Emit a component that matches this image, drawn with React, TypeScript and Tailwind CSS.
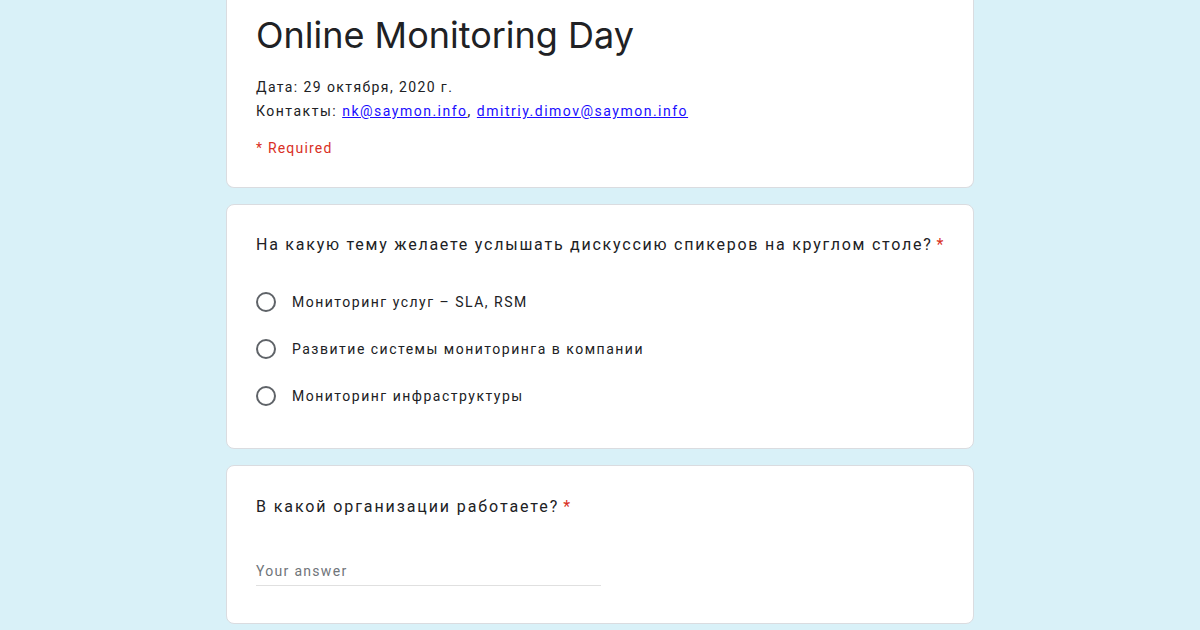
const options = [
  "Мониторинг услуг – SLA, RSM",
  "Развитие системы мониторинга в компании",
  "Мониторинг инфраструктуры",
];

const Req = () => <span className="ml-1 text-[#d93025]">*</span>;

const Card = ({ className = "", children }: { className?: string; children: React.ReactNode }) => (
  <div className={"w-[748px] bg-white border border-[#dadce0] rounded-lg px-[29px] " + className}>{children}</div>
);

export default function App() {
  return (
    <div
      className="w-[1200px] h-[630px] overflow-hidden bg-[#d9f1f8] flex flex-col items-center gap-4 text-[#202124]"
      style={{ fontFamily: "Roboto, 'Noto Sans', sans-serif" }}
    >
      <Card className="rounded-t-none border-t-0 pt-[11px] pb-[27px]">
        <h1 className="text-[36px] leading-[48px] tracking-[0px]" style={{ fontFamily: "Inter, 'Open Sans', sans-serif" }}>
          Online Monitoring Day
        </h1>
        <div className="mt-[16px] text-sm leading-6">
          <p className="tracking-[1.4px]">Дата: 29 октября, 2020 г.</p>
          <p className="tracking-[1.5px]">
            Контакты:{" "}
            <a href="#" className="text-[#1a0dff] underline">nk@saymon.info</a>,{" "}
            <a href="#" className="text-[#1a0dff] underline">dmitriy.dimov@saymon.info</a>
          </p>
        </div>
        <p className="mt-[13px] text-sm leading-6 tracking-[1.2px] text-[#d93025]">* Required</p>
      </Card>

      <Card className="pt-[28px] pb-[29px]">
        <p className="text-base leading-6 tracking-[1.76px] whitespace-nowrap">
          На какую тему желаете услышать дискуссию спикеров на круглом столе?<Req />
        </p>
        <div className="mt-[21px] flex flex-col">
          {options.map((o) => (
            <label key={o} className="h-[47px] flex items-center gap-4">
              <span className="w-5 h-5 rounded-full border-2 border-[#5f6368] shrink-0" />
              <span className="text-sm tracking-[1.5px]">{o}</span>
            </label>
          ))}
        </div>
      </Card>

      <Card className="pt-[29px] pb-[37px]">
        <p className="text-base leading-6 tracking-[1.9px] whitespace-nowrap">
          В какой организации работаете?<Req />
        </p>
        <div className="mt-[40px] w-[345px] border-b border-[#e0e0e0] pb-[2px]">
          <span className="text-sm leading-5 tracking-[1.3px] text-[#70757a]">Your answer</span>
        </div>
      </Card>
    </div>
  );
}
